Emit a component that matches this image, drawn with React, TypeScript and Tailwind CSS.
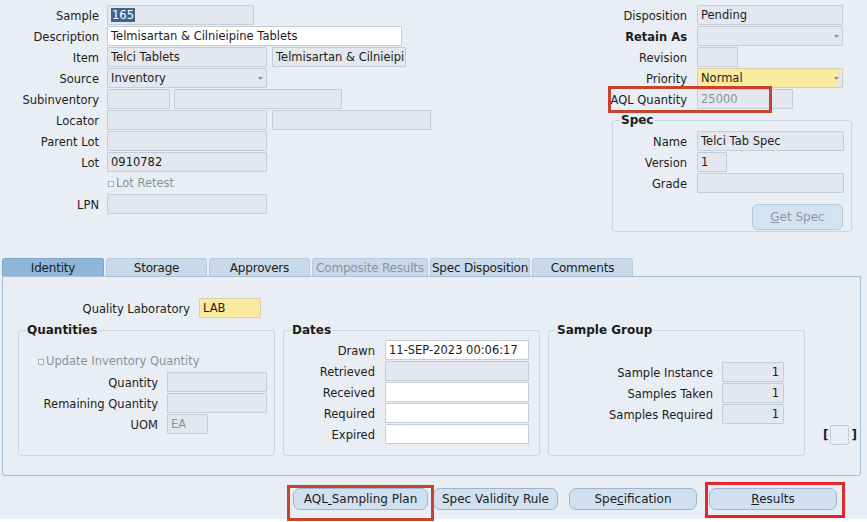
import React from 'react';

type Tone = 'gray' | 'white' | 'yellow';

const toneClass: Record<Tone, string> = {
  gray: 'bg-[#e4e8ee] border-[#c3cdd8]',
  white: 'bg-white border-[#c3cdd8]',
  yellow: 'bg-[#fbeb9f] border-[#d6d0a6]',
};

interface FieldProps {
  w: string;
  value?: React.ReactNode;
  tone?: Tone;
  dim?: boolean;
  right?: boolean;
  select?: boolean;
}

const Caret = () => (
  <svg className="absolute right-[3px] top-[8px]" width="5" height="3" viewBox="0 0 5 3">
    <path d="M0 0 L5 0 L2.5 3 Z" fill="#8a9099" />
  </svg>
);

const Field: React.FC<FieldProps> = ({ w, value, tone = 'gray', dim, right, select }) => (
  <div className={`relative h-[20px] shrink-0 rounded-[1px] border ${toneClass[tone]} ${w}`}>
    <div
      className={`h-full overflow-hidden whitespace-nowrap px-[3px] pt-[1px] leading-[17px] ${dim ? 'text-[#8c9198]' : 'text-[#1c1c1c]'} ${right ? 'pr-[4px] text-right' : ''}`}
    >
      {value}
    </div>
    {select && <Caret />}
  </div>
);

interface RowProps {
  label?: React.ReactNode;
  labelW: string;
  bold?: boolean;
  children: React.ReactNode;
}

const Row: React.FC<RowProps> = ({ label, labelW, bold, children }) => (
  <div className="flex h-[21px] items-start">
    <div className={`${labelW} shrink-0 whitespace-nowrap pt-[1px] text-right leading-[20px] ${bold ? 'font-bold' : ''}`}>{label}</div>
    <div className="flex gap-[5px]">{children}</div>
  </div>
);

const Check: React.FC<{ label: string }> = ({ label }) => (
  <div className="flex h-[21px] items-center text-[#8c9198]">
    <span className="mr-[2px] inline-block h-[6px] w-[6px] border border-[#a9b0b8] bg-[#f2f4f7]" />
    {label}
  </div>
);

const Group: React.FC<{ title: string; className: string; children: React.ReactNode }> = ({ title, className, children }) => (
  <fieldset className={`shrink-0 rounded-[3px] border border-[#c9d5e2] ${className}`}>
    <legend className="ml-[7px] px-[1px] text-[12px] font-bold leading-[14px]">{title}</legend>
    {children}
  </fieldset>
);

const tabs = [
  { name: 'Identity', w: 'w-[102px]', active: true },
  { name: 'Storage', w: 'w-[101px]' },
  { name: 'Approvers', w: 'w-[101px]' },
  { name: 'Composite Results', w: 'w-[116px]', disabled: true },
  { name: 'Spec Disposition', w: 'w-[100px]' },
  { name: 'Comments', w: 'w-[101px]' },
];

const Button: React.FC<{ w: string; className?: string; children: React.ReactNode }> = ({ w, className = '', children }) => (
  <button
    type="button"
    className={`h-[22px] shrink-0 rounded-[7px] border border-[#9db4ca] bg-[#cfe1f1] text-[12px] leading-[20px] text-[#1c1c1c] ${w} ${className}`}
  >
    {children}
  </button>
);

export default function App() {
  return (
    <div className="relative flex h-[522px] w-[867px] flex-col overflow-hidden bg-[#e9eef5] font-['DejaVu_Sans',sans-serif] text-[11.5px] text-[#1c1c1c]">
      {/* header block */}
      <div className="flex h-[258px] shrink-0">
        <div className="w-[560px] shrink-0 pt-[5px]">
          <Row label="Sample" labelW="w-[107px] pr-[8px]">
            <Field
              w="w-[147px]"
              value={<span className="bg-[#3f6492] px-[1px] text-white">165</span>}
            />
          </Row>
          <Row label="Description" labelW="w-[107px] pr-[8px]">
            <Field w="w-[295px]" tone="white" value="Telmisartan & Cilnieipine Tablets" />
          </Row>
          <Row label="Item" labelW="w-[107px] pr-[8px]">
            <Field w="w-[160px]" value="Telci Tablets" />
            <Field w="w-[134px]" value="Telmisartan & Cilnieipi" />
          </Row>
          <Row label="Source" labelW="w-[107px] pr-[8px]">
            <Field w="w-[160px]" value="Inventory" select />
          </Row>
          <Row label="Subinventory" labelW="w-[107px] pr-[8px]">
            <div className="flex gap-[4px]">
              <Field w="w-[63px]" />
              <Field w="w-[168px]" />
            </div>
          </Row>
          <Row label="Locator" labelW="w-[107px] pr-[8px]">
            <Field w="w-[160px]" />
            <Field w="w-[159px]" />
          </Row>
          <Row label="Parent Lot" labelW="w-[107px] pr-[8px]">
            <Field w="w-[160px]" />
          </Row>
          <Row label="Lot" labelW="w-[107px] pr-[8px]">
            <Field w="w-[160px]" value="0910782" />
          </Row>
          <Row labelW="w-[108px]">
            <Check label="Lot Retest" />
          </Row>
          <Row label="LPN" labelW="w-[107px] pr-[8px]">
            <Field w="w-[160px]" />
          </Row>
        </div>

        <div className="w-[307px] shrink-0 pt-[5px]">
          <Row label="Disposition" labelW="w-[137px] pr-[10px]">
            <Field w="w-[146px]" value="Pending" />
          </Row>
          <Row label="Retain As" labelW="w-[137px] pr-[10px]" bold>
            <Field w="w-[146px]" select />
          </Row>
          <Row label="Revision" labelW="w-[137px] pr-[10px]">
            <Field w="w-[41px]" />
          </Row>
          <Row label="Priority" labelW="w-[137px] pr-[10px]">
            <div className="relative flex h-[20px] w-[146px] rounded-[1px] border border-[#d6d0a6] bg-[#e4e8ee]">
              <div className="w-[140px] bg-[#fbeb9f] px-[3px] pt-[1px] leading-[17px]">Normal</div>
              <Caret />
            </div>
          </Row>
          <Row label="AQL Quantity" labelW="w-[137px] pr-[10px]">
            <Field w="w-[96px]" value="25000" dim />
          </Row>

          <Group title="Spec" className="ml-[52px] mt-[3px] h-[119px] w-[240px]">
            <div className="pt-[4px]">
              <Row label="Name" labelW="w-[84px] pr-[10px]">
                <Field w="w-[147px]" value="Telci Tab Spec" />
              </Row>
              <Row label="Version" labelW="w-[84px] pr-[10px]">
                <Field w="w-[30px]" value="1" />
              </Row>
              <Row label="Grade" labelW="w-[84px] pr-[10px]">
                <Field w="w-[147px]" />
              </Row>
              <div className="mt-[10px] flex justify-end pr-[8px]">
                <button
                  type="button"
                  className="h-[26px] w-[91px] rounded-[6px] border border-[#b3c9dd] bg-[#d2e3f2] text-[12px] text-[#8d98a4]"
                >
                  <span className="underline">G</span>et Spec
                </button>
              </div>
            </div>
          </Group>
        </div>
      </div>

      {/* tabs */}
      <div className="flex h-[18px] shrink-0 gap-[2px] pl-[2px]">
        {tabs.map(t => (
          <div
            key={t.name}
            className={`${t.w} shrink-0 whitespace-nowrap rounded-t-[3px] border border-b-0 pt-[1px] text-center text-[12px] leading-[16px] tracking-[-0.2px] ${
              t.active ? 'border-[#7ea6cb] bg-[#8fb5d8]' : 'border-[#b7cbe0] bg-[#c8d9ea]'
            } ${t.disabled ? 'text-[#8c949c]' : 'text-[#1c1c1c]'}`}
          >
            {t.name}
          </div>
        ))}
      </div>

      <div className="ml-[2px] flex h-[200px] w-[859px] shrink-0 flex-col rounded-b-[3px] border border-[#a9bfd4] bg-[#e9eef5]">
        <div className="pt-[21px]">
          <Row label="Quality Laboratory" labelW="w-[196px] pr-[9px]">
            <Field w="w-[62px]" tone="yellow" value="LAB" />
          </Row>
        </div>

        <div className="mt-[4px] flex w-[857px] pl-[15px]">
          <Group title="Quantities" className="h-[133px] w-[257px]">
            <div className="pl-[19px] pt-[14px]">
              <Check label="Update Inventory Quantity" />
            </div>
            <Row label="Quantity" labelW="w-[148px] pr-[9px]">
              <Field w="w-[100px]" />
            </Row>
            <Row label="Remaining Quantity" labelW="w-[148px] pr-[9px]">
              <Field w="w-[100px]" />
            </Row>
            <Row label="UOM" labelW="w-[148px] pr-[9px]">
              <Field w="w-[41px]" value="EA" dim />
            </Row>
          </Group>

          <Group title="Dates" className="ml-[8px] h-[133px] w-[257px]">
            <div className="pt-[3px]">
              <Row label="Drawn" labelW="w-[101px] pr-[10px]">
                <Field w="w-[144px]" tone="white" value="11-SEP-2023 00:06:17" />
              </Row>
              <Row label="Retrieved" labelW="w-[101px] pr-[10px]">
                <Field w="w-[144px]" />
              </Row>
              <Row label="Received" labelW="w-[101px] pr-[10px]">
                <Field w="w-[144px]" tone="white" />
              </Row>
              <Row label="Required" labelW="w-[101px] pr-[10px]">
                <Field w="w-[144px]" tone="white" />
              </Row>
              <Row label="Expired" labelW="w-[101px] pr-[10px]">
                <Field w="w-[144px]" tone="white" />
              </Row>
            </div>
          </Group>

          <Group title="Sample Group" className="ml-[8px] h-[133px] w-[257px]">
            <div className="pt-[25px]">
              <Row label="Sample Instance" labelW="w-[173px] pr-[9px]">
                <Field w="w-[62px]" value="1" right />
              </Row>
              <Row label="Samples Taken" labelW="w-[173px] pr-[9px]">
                <Field w="w-[62px]" value="1" right />
              </Row>
              <Row label="Samples Required" labelW="w-[173px] pr-[9px]">
                <Field w="w-[62px]" value="1" right />
              </Row>
            </div>
          </Group>

          <div className="ml-[18px] mt-[102px] h-[20px] w-[36px] shrink-0 whitespace-nowrap text-[12px] font-bold leading-[20px] text-[#1c1c1c]">
            [<span className="mx-[2px] inline-block h-[20px] w-[19px] rounded-[2px] border border-[#c3cdd8] bg-[#e9eef5] align-top" />]
          </div>
        </div>
      </div>

      {/* buttons */}
      <div className="mt-[12px] flex shrink-0 pl-[293px]">
        <Button w="w-[135px]">
          AQL<span className="underline"> </span>Sampling Plan
        </Button>
        <Button w="w-[125px]" className="ml-[5px]">
          Spec Validity Rule
        </Button>
        <Button w="w-[128px]" className="ml-[11px]">
          Spe<span className="underline">c</span>ification
        </Button>
        <Button w="w-[128px]" className="ml-[12px]">
          <span className="underline">R</span>esults
        </Button>
      </div>
      <div className="mt-auto h-[3px] shrink-0 bg-white" />

      {/* annotation boxes */}
      <div className="pointer-events-none absolute left-[608px] top-[86px] h-[27px] w-[164px] border-[3px] border-[#c8432e]" />
      <div className="pointer-events-none absolute left-[287px] top-[485px] h-[36px] w-[147px] border-[3px] border-[#c8432e]" />
      <div className="pointer-events-none absolute left-[705px] top-[482px] h-[36px] w-[140px] border-[3px] border-[#e2262b]" />
    </div>
  );
}
